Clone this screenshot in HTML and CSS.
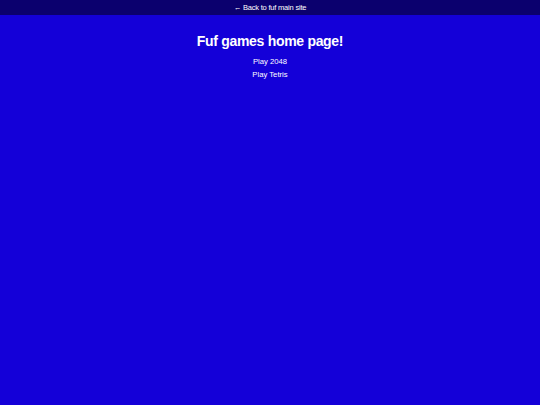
FILE: index.html
```html
<!DOCTYPE html>
<html>
<head>
<meta charset="utf-8">
<link rel="stylesheet" href="styles.css">
</head>
<body>
<div class="topbar"><a href="#" class="back">← Back to fuf main site</a></div>
<main class="content">
<h1 class="title">Fuf games home page!</h1>
<ul class="games">
<li><a href="#">Play 2048</a></li>
<li><a href="#">Play Tetris</a></li>
</ul>
</main>
</body>
</html>
```
FILE: styles.css
```css
html, body { margin: 0; padding: 0; }
body {
  background: #1400d8;
  color: #fff;
  font-family: "Liberation Sans", Arial, sans-serif;
  min-height: 405px;
}
a { color: #fff; text-decoration: none; }
.topbar {
  background: #0b006e;
  height: 15px;
  display: flex;
  align-items: center;
  justify-content: center;
  font-size: 7.5px;
  letter-spacing: -0.2px;
}
.content {
  display: flex;
  flex-direction: column;
  align-items: center;
  padding-top: 17px;
}
.title {
  margin: 0;
  font-size: 14px;
  font-weight: bold;
  line-height: 18px;
  letter-spacing: -0.3px;
}
.games {
  list-style: none;
  margin: 5px 0 0;
  padding: 0;
  font-size: 7.7px;
  line-height: 13px;
  text-align: center;
}
```
